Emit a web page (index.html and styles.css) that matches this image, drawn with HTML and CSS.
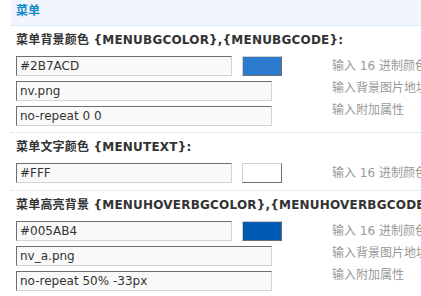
FILE: index.html
```html
<!DOCTYPE html>
<html lang="zh-CN">
<head>
<meta charset="utf-8">
<title>菜单</title>
<link rel="stylesheet" href="styles.css">
</head>
<body>
<div class="panel">
  <div class="panel-head">菜单</div>

  <div class="section">
    <div class="label">菜单背景颜色 {MENUBGCOLOR},{MENUBGCODE}:</div>
    <div class="body">
      <div class="fields">
        <div class="color-row">
          <input class="txt txt-short" type="text" value="#2B7ACD">
          <span class="swatch" style="background:#2B7ACD"></span>
        </div>
        <input class="txt" type="text" value="nv.png">
        <input class="txt" type="text" value="no-repeat 0 0">
      </div>
      <div class="hints">
        <div class="hint">输入 16 进制颜色</div>
        <div class="hint">输入背景图片地址</div>
        <div class="hint">输入附加属性</div>
      </div>
    </div>
  </div>

  <div class="section">
    <div class="label">菜单文字颜色 {MENUTEXT}:</div>
    <div class="body">
      <div class="fields">
        <div class="color-row">
          <input class="txt txt-short" type="text" value="#FFF">
          <span class="swatch" style="background:#FFFFFF"></span>
        </div>
      </div>
      <div class="hints">
        <div class="hint">输入 16 进制颜色</div>
      </div>
    </div>
  </div>

  <div class="section">
    <div class="label">菜单高亮背景 {MENUHOVERBGCOLOR},{MENUHOVERBGCODE}:</div>
    <div class="body">
      <div class="fields">
        <div class="color-row">
          <input class="txt txt-short" type="text" value="#005AB4">
          <span class="swatch" style="background:#005AB4"></span>
        </div>
        <input class="txt" type="text" value="nv_a.png">
        <input class="txt" type="text" value="no-repeat 50% -33px">
      </div>
      <div class="hints">
        <div class="hint">输入 16 进制颜色</div>
        <div class="hint">输入背景图片地址</div>
        <div class="hint">输入附加属性</div>
      </div>
    </div>
  </div>
</div>
</body>
</html>
```

FILE: styles.css
```css
html, body {
  margin: 0;
  padding: 0;
  background: #fff;
  overflow: hidden;
}
body {
  padding-left: 11px;
  font-family: "DejaVu Sans", "Noto Sans CJK SC", sans-serif;
  font-size: 12px;
  color: #333;
}
.panel {
  width: 600px;
}
.panel-head {
  height: 25px;
  line-height: 22px;
  padding-left: 5px;
  background: #f1f6fd;
  border-bottom: 1px dotted #c9def0;
  color: #1189c9;
  font-weight: bold;
  font-size: 12px;
}
.section {
  padding: 5px 0 6px 5px;
  border-bottom: 1px dotted #c9def0;
}
.label {
  line-height: 18px;
  height: 18px;
  font-weight: bold;
  color: #333;
  white-space: nowrap;
  letter-spacing: 0.2px;
  margin-bottom: 7px;
}
.body {
  display: flex;
  align-items: flex-start;
}
.fields {
  flex: 0 0 256px;
  width: 256px;
  display: flex;
  flex-direction: column;
  gap: 5px;
}
.color-row {
  display: flex;
  align-items: center;
}
.txt {
  box-sizing: border-box;
  flex-shrink: 0;
  width: 256px;
  height: 20px;
  margin: 0;
  padding: 0 3px;
  border-style: solid;
  border-width: 1px;
  border-color: #6f6f6f #d4d4d4 #d4d4d4 #6f6f6f;
  background: #f9f9f9;
  font-family: "DejaVu Sans", sans-serif;
  font-size: 12px;
  color: #333;
  outline: none;
}
.txt-short {
  width: 216px;
}
.swatch {
  box-sizing: border-box;
  flex-shrink: 0;
  display: block;
  width: 40px;
  height: 20px;
  margin-left: 10px;
  border-style: solid;
  border-width: 1px;
  border-color: #d8d0c8 #6f6f6f #6f6f6f #d8d0c8;
}
.hints {
  margin-left: 60px;
  white-space: nowrap;
}
.hint {
  line-height: 22px;
  color: #999;
}
.hint:first-child {
  margin-top: -1px;
}
```
